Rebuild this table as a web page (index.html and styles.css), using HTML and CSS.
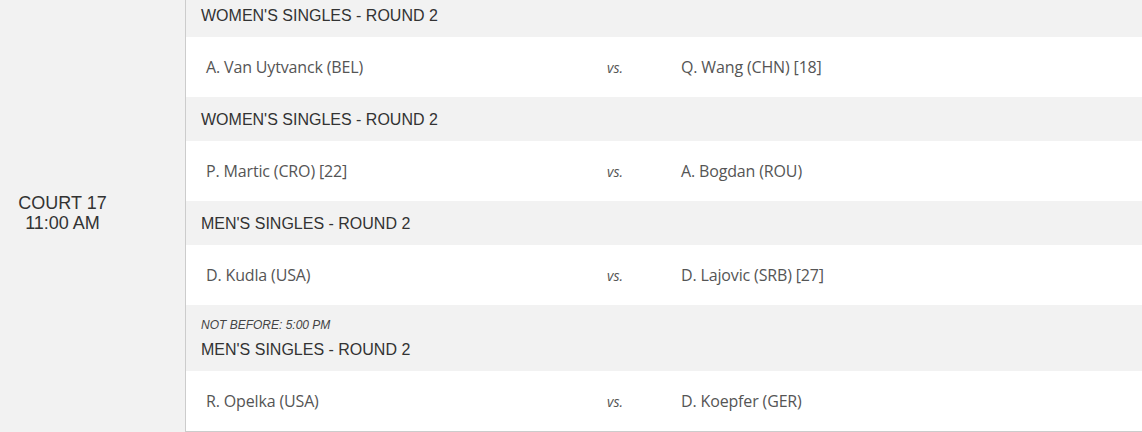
FILE: index.html
```html
<!DOCTYPE html>
<html>
<head>
<meta charset="utf-8">
<link rel="stylesheet" href="styles.css">
</head>
<body>
<div class="schedule">
  <div class="court">
    <div class="court-name">COURT 17</div>
    <div class="court-time">11:00 AM</div>
  </div>
  <div class="matches">
    <div class="event"><div class="round">WOMEN'S SINGLES - ROUND 2</div></div>
    <div class="match">
      <div class="player">A. Van Uytvanck (BEL)</div>
      <div class="vs">vs.</div>
      <div class="player">Q. Wang (CHN) [18]</div>
    </div>
    <div class="event"><div class="round">WOMEN'S SINGLES - ROUND 2</div></div>
    <div class="match">
      <div class="player">P. Martic (CRO) [22]</div>
      <div class="vs">vs.</div>
      <div class="player">A. Bogdan (ROU)</div>
    </div>
    <div class="event"><div class="round">MEN'S SINGLES - ROUND 2</div></div>
    <div class="match">
      <div class="player">D. Kudla (USA)</div>
      <div class="vs">vs.</div>
      <div class="player">D. Lajovic (SRB) [27]</div>
    </div>
    <div class="event event-note">
      <div class="note">NOT BEFORE: 5:00 PM</div>
      <div class="round">MEN'S SINGLES - ROUND 2</div>
    </div>
    <div class="match">
      <div class="player">R. Opelka (USA)</div>
      <div class="vs">vs.</div>
      <div class="player">D. Koepfer (GER)</div>
    </div>
  </div>
</div>
</body>
</html>
```
FILE: styles.css
```css
html, body {
  margin: 0;
  padding: 0;
  background: #ffffff;
}
.schedule {
  display: flex;
  width: 1142px;
  margin-top: -7px;
  font-family: "Liberation Sans", Arial, sans-serif;
  color: #333333;
}
.court {
  width: 185px;
  flex: none;
  background: #f2f2f2;
  display: flex;
  flex-direction: column;
  justify-content: center;
  align-items: center;
  font-size: 18px;
  line-height: 20px;
  color: #333333;
  padding-right: 60px;
  box-sizing: border-box;
}
.matches {
  flex: 1;
  border-left: 1px solid #cccccc;
  border-bottom: 1px solid #cccccc;
}
.event {
  background: #f2f2f2;
  height: 44px;
  box-sizing: border-box;
  padding-left: 15px;
  padding-top: 2px;
  display: flex;
  flex-direction: column;
  justify-content: center;
}
.event-note {
  height: 66px;
  padding-top: 2px;
}
.round {
  font-size: 16px;
  line-height: 20px;
  color: #333333;
}
.note {
  font-size: 12px;
  font-style: italic;
  line-height: 14px;
  color: #444444;
  margin-bottom: 8px;
}
.match {
  height: 60px;
  display: grid;
  grid-template-columns: 401px 74px 1fr;
  align-items: center;
  padding-left: 20px;
  background: #ffffff;
}
.player {
  font-family: "Open Sans", "Noto Sans", sans-serif;
  font-size: 16px;
  line-height: 22px;
  color: #555555;
  letter-spacing: -0.15px;
}
.vs {
  font-family: "Open Sans", sans-serif;
  font-style: italic;
  font-size: 14px;
  color: #555555;
}
```
